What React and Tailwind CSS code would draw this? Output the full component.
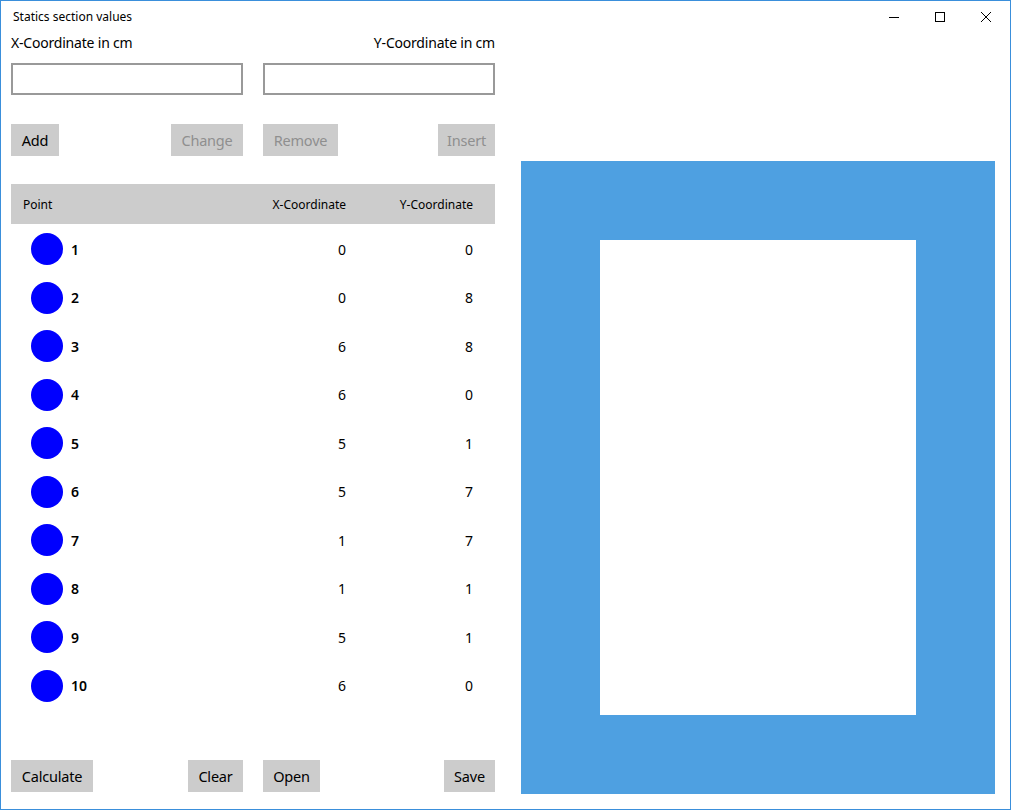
import React from 'react';

const points = [
  { id: 1, x: 0, y: 0 },
  { id: 2, x: 0, y: 8 },
  { id: 3, x: 6, y: 8 },
  { id: 4, x: 6, y: 0 },
  { id: 5, x: 5, y: 1 },
  { id: 6, x: 5, y: 7 },
  { id: 7, x: 1, y: 7 },
  { id: 8, x: 1, y: 1 },
  { id: 9, x: 5, y: 1 },
  { id: 10, x: 6, y: 0 },
];

const font = { fontFamily: '"Segoe UI", "Noto Sans", sans-serif' };

const Btn = ({ children, disabled, w }) => (
  <button
    className={
      'h-[32px] bg-[#cccccc] text-[14.5px] leading-none tracking-[-0.2px] flex items-center justify-center ' +
      w +
      (disabled ? ' text-[#8f8f8f]' : ' text-black')
    }
  >
    {children}
  </button>
);

const WindowButtons = () => (
  <div className="flex h-[32px]">
    <div className="w-[46px] flex items-center justify-center">
      <svg width="10" height="10" viewBox="0 0 10 10">
        <line x1="0" y1="5.5" x2="10" y2="5.5" stroke="#000" strokeWidth="1" />
      </svg>
    </div>
    <div className="w-[46px] flex items-center justify-center">
      <svg width="10" height="10" viewBox="0 0 10 10">
        <rect x="0.5" y="0.5" width="9" height="9" fill="none" stroke="#000" strokeWidth="1" />
      </svg>
    </div>
    <div className="w-[46px] flex items-center justify-center">
      <svg width="10" height="10" viewBox="0 0 10 10">
        <path d="M0 0 L10 10 M10 0 L0 10" stroke="#000" strokeWidth="1" />
      </svg>
    </div>
  </div>
);

export default function App() {
  return (
    <div
      className="w-[1011px] h-[810px] border border-[#3a8fdb] bg-white flex flex-col overflow-hidden text-black"
      style={font}
    >
      {/* title bar */}
      <div className="flex h-[32px] items-center justify-between shrink-0">
        <span className="pl-[12px] text-[12px] leading-none">Statics section values</span>
        <div className="pr-[1px]">
          <WindowButtons />
        </div>
      </div>

      <div className="flex flex-1">
        {/* left panel */}
        <div className="ml-[10px] w-[484px] flex flex-col">
          <div className="flex justify-between text-[14px] tracking-[-0.2px] leading-[20px]">
            <span>X-Coordinate in cm</span>
            <span>Y-Coordinate in cm</span>
          </div>

          <div className="flex gap-[20px] mt-[10px]">
            <input className="w-[232px] h-[32px] border-2 border-[#999999] outline-none px-2" />
            <input className="w-[232px] h-[32px] border-2 border-[#999999] outline-none px-2" />
          </div>

          <div className="flex gap-[20px] mt-[29px]">
            <div className="w-[232px] flex justify-between">
              <Btn w="w-[48px]">Add</Btn>
              <Btn w="w-[72px]" disabled>Change</Btn>
            </div>
            <div className="w-[232px] flex justify-between">
              <Btn w="w-[75px]" disabled>Remove</Btn>
              <Btn w="w-[57px]" disabled>Insert</Btn>
            </div>
          </div>

          {/* points table */}
          <div className="mt-[28px] h-[40px] bg-[#cccccc] flex items-center text-[12px] pr-[22px] pt-[2px]">
            <span className="flex-1 pl-[12px]">Point</span>
            <span className="text-right">X-Coordinate</span>
            <span className="w-[127px] text-right">Y-Coordinate</span>
          </div>

          <div className="flex flex-col pt-[1px]">
            {points.map((p) => (
              <div key={p.id} className="h-[48.5px] flex items-center text-[14px] pr-[22px]">
                <div className="flex-1 flex items-center pl-[20px]">
                  <div className="w-[32px] h-[32px] rounded-full bg-[#0000ff]" />
                  <span className="ml-[8px] font-semibold">{p.id}</span>
                </div>
                <span className="text-right">{p.x}</span>
                <span className="w-[127px] text-right">{p.y}</span>
              </div>
            ))}
          </div>

          <div className="flex gap-[20px] mt-auto mb-[17px]">
            <div className="w-[232px] flex justify-between">
              <Btn w="w-[82px]">Calculate</Btn>
              <Btn w="w-[55px]">Clear</Btn>
            </div>
            <div className="w-[232px] flex justify-between">
              <Btn w="w-[57px]">Open</Btn>
              <Btn w="w-[51px]">Save</Btn>
            </div>
          </div>
        </div>

        {/* section drawing */}
        <div className="ml-[26px] w-[474px] mt-[128px] mb-[15px] bg-[#4ea0e1] p-[79px]">
          <div className="w-full h-full bg-white" />
        </div>
      </div>
    </div>
  );
}
